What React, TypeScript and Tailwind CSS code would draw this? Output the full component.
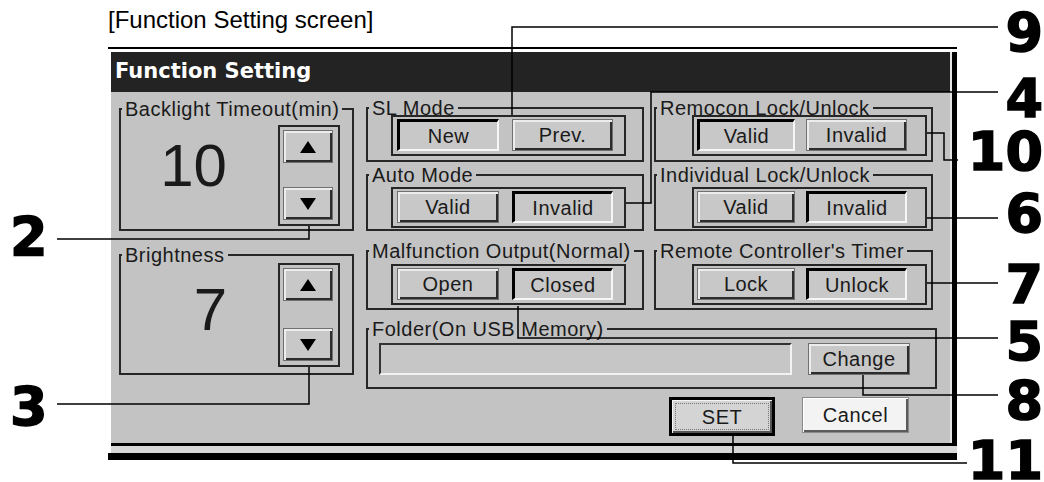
import type { ReactNode } from 'react';

const FACE = 'bg-[#c8c8c8]';

function Group({ label, className, children }: { label: string; className: string; children?: ReactNode }) {
  return (
    <fieldset className={`min-w-0 border-2 border-[#262626] ${className}`}>
      <legend className="ml-[1px] px-[3px] text-[20px] leading-[14px] tracking-[0.5px]">{label}</legend>
      {children}
    </fieldset>
  );
}

function Btn({ children, pressed, className }: { children: ReactNode; pressed?: boolean; className: string }) {
  if (pressed) {
    return (
      <button
        type="button"
        className={`flex items-center justify-center border-t-[3px] border-l-[3px] border-b-2 border-r-2 border-t-black border-l-black border-b-[#f6f6f6] border-r-[#f6f6f6] ${FACE} text-[20px] tracking-[0.5px] ${className}`}
      >
        {children}
      </button>
    );
  }
  return (
    <button
      type="button"
      className={`flex items-center justify-center border border-[#707070] ${FACE} shadow-[inset_2px_2px_0_#ececec,inset_-2px_-2px_0_#2c2c2c] text-[20px] tracking-[0.5px] ${className}`}
    >
      {children}
    </button>
  );
}

function Triangle({ down }: { down?: boolean }) {
  return (
    <svg width="16" height="12" viewBox="0 0 16 12">
      <polygon points={down ? '0,0 16,0 8,12' : '8,0 16,12 0,12'} fill="#000" />
    </svg>
  );
}

function Spinner({ gap, className }: { gap: string; className: string }) {
  return (
    <div className={`flex w-[62px] flex-col border-2 border-[#262626] pl-[3px] pt-[3px] ${gap} ${className}`}>
      <Btn className="h-[33px] w-[50px]"><Triangle /></Btn>
      <Btn className="h-[33px] w-[50px]"><Triangle down /></Btn>
    </div>
  );
}

function Choice({ a, b, selected, layout, className }: { a: string; b: string; selected: 0 | 1; layout: 'mid' | 'right'; className: string }) {
  const mid = layout === 'mid';
  return (
    <div className={`flex h-[41px] w-[235px] items-start border-2 border-[#262626] pt-[2px] ${mid ? 'ml-[23px] gap-[13px] pl-[4px]' : 'ml-[36px] gap-[11px] pl-[3px]'} ${className}`}>
      <Btn pressed={selected === 0} className={`h-[32px] ${mid ? 'w-[102px]' : 'w-[98px]'}`}>{a}</Btn>
      <Btn pressed={selected === 1} className="h-[32px] w-[101px]">{b}</Btn>
    </div>
  );
}

// callout numbers of the figure, placed at their spots on the drawing
const CALLOUTS: { n: string; top: string; left?: boolean }[] = [
  { n: '9', top: 'top-[12px]' },
  { n: '4', top: 'top-[78px]' },
  { n: '10', top: 'top-[131px]' },
  { n: '6', top: 'top-[193px]' },
  { n: '7', top: 'top-[264px]' },
  { n: '5', top: 'top-[321px]' },
  { n: '8', top: 'top-[380px]' },
  { n: '11', top: 'top-[440px]' },
  { n: '2', top: 'top-[216px]', left: true },
  { n: '3', top: 'top-[386px]', left: true },
];

const LINES = [
  '512,115 512,27 998,27',
  '626,203 651,203 651,92 998,92',
  '927,133 944,133 944,160 958,160',
  '927,218 998,218',
  '927,283 998,283',
  '518,306 518,338 998,338',
  '863,375 863,395 998,395',
  '733,436 733,463 967,463',
  '309,226 309,239 57,239',
  '309,367 309,404 57,404',
];

export default function App() {
  return (
    <div className="relative h-[482px] w-[1044px] overflow-hidden bg-white font-['Liberation_Sans',Arial,sans-serif] text-[#1a1a1a]">
      <div className="pl-[108px] pt-[7px]">
        <p className="text-[24px] leading-[26px] text-black">[Function Setting screen]</p>

        <div className="mt-[14px] w-[849px] border-t-2 border-b-[7px] border-black pl-[3px] pt-[3px]">
          <div className="border-r-[5px] border-b-[3px] border-black bg-[#c3c3c3]">
            <div className="border-r-2 border-[#e4e4e4]">
              <div className="flex h-[40px] items-center bg-[#232323] pl-[4px] font-['DejaVu_Sans',sans-serif] text-[21px] font-bold text-white">
                Function Setting
              </div>

              <div className="flex h-[351px] gap-[12px] pl-[8px] pt-[9px]">
                {/* left column */}
                <div className="flex w-[235px] flex-col">
                  <Group label="Backlight Timeout(min)" className="mt-[1px] h-[129px]">
                    <div className="flex">
                      <div className="flex-1 pr-[51px] pt-[20px] text-right text-[60px] leading-[60px]">10</div>
                      <Spinner gap="gap-[24px]" className="mr-[12px] mt-[9px] h-[101px]" />
                    </div>
                  </Group>
                  <Group label="Brightness" className="mt-[17px] h-[127px]">
                    <div className="flex">
                      <div className="flex-1 pr-[51px] pt-[18px] text-right text-[60px] leading-[60px]">7</div>
                      <Spinner gap="gap-[27px]" className="mr-[12px] mt-[1px] h-[104px]" />
                    </div>
                  </Group>
                </div>

                {/* middle + right columns */}
                <div className="flex flex-col">
                  <div className="flex gap-[10px]">
                    <Group label="SL Mode" className="h-[61px] w-[278px]">
                      <Choice a="New" b="Prev." selected={0} layout="mid" className="mt-0" />
                    </Group>
                    <Group label="Remocon Lock/Unlock" className="h-[61px] w-[279px]">
                      <Choice a="Valid" b="Invalid" selected={0} layout="right" className="mt-0" />
                    </Group>
                  </div>
                  <div className="mt-[6px] flex gap-[10px]">
                    <Group label="Auto Mode" className="h-[63px] w-[278px]">
                      <Choice a="Valid" b="Invalid" selected={1} layout="mid" className="mt-[5px]" />
                    </Group>
                    <Group label="Individual Lock/Unlock" className="h-[63px] w-[279px]">
                      <Choice a="Valid" b="Invalid" selected={1} layout="right" className="mt-[5px]" />
                    </Group>
                  </div>
                  <div className="mt-[13px] flex gap-[10px]">
                    <Group label="Malfunction Output(Normal)" className="h-[66px] w-[278px]">
                      <Choice a="Open" b="Closed" selected={1} layout="mid" className="mt-[6px]" />
                    </Group>
                    <Group label="Remote Controller's Timer" className="h-[66px] w-[279px]">
                      <Choice a="Lock" b="Unlock" selected={1} layout="right" className="mt-[6px]" />
                    </Group>
                  </div>

                  <Group label="Folder(On USB Memory)" className="mt-[12px] h-[67px] w-[571px]">
                    <div className="mt-[7px] flex">
                      <div className="ml-[11px] h-[32px] w-[413px] border-2 border-t-[#333] border-l-[#333] border-b-[#f2f2f2] border-r-[#f2f2f2] bg-[#c6c6c6]" />
                      <Btn className="ml-[16px] h-[32px] w-[102px]">Change</Btn>
                    </div>
                  </Group>

                  <div className="mt-[8px] flex items-start">
                    <div className="ml-[303px] h-[39px] w-[106px] border-[3px] border-black">
                      <div className="flex h-full items-center justify-center bg-[#d4d4d4] p-[3px] shadow-[inset_1px_1px_0_#f4f4f4,inset_-2px_-2px_0_#555]">
                        <span className="flex h-full w-full items-center justify-center border border-dotted border-[#777] text-[20px] tracking-[0.5px]">
                          SET
                        </span>
                      </div>
                    </div>
                    <button
                      type="button"
                      className="ml-[27px] flex h-[36px] w-[107px] items-center justify-center border border-[#8a8a8a] bg-[#f3f3f3] text-[20px] tracking-[0.5px] shadow-[inset_1px_1px_0_#ffffff,inset_-2px_-2px_0_#5a5a5a]"
                    >
                      Cancel
                    </button>
                  </div>
                </div>
              </div>
            </div>
          </div>
          <div className="h-[7px] bg-[#d8d8d8]" />
        </div>
      </div>

      {/* callout lines */}
      <svg className="pointer-events-none absolute left-0 top-0" width="1044" height="482">
        {LINES.map(p => (
          <polyline key={p} points={p} fill="none" stroke="#000" strokeWidth="1.5" />
        ))}
      </svg>

      {CALLOUTS.map(c => (
        <span
          key={c.n}
          className={`absolute ${c.top} ${c.left ? 'left-[10px]' : 'right-[1px]'} font-['DejaVu_Sans',sans-serif] text-[54px] font-bold leading-[42px] text-black [-webkit-text-stroke:1.5px_black]`}
        >
          {c.n}
        </span>
      ))}
    </div>
  );
}
